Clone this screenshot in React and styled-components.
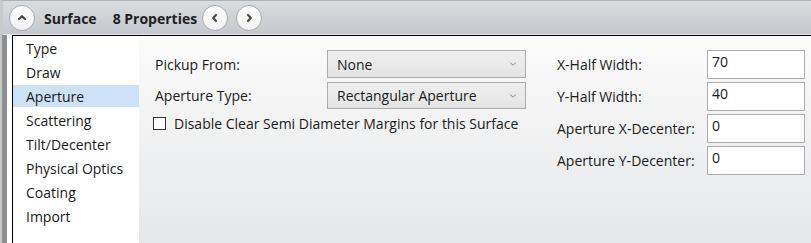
import React from "react";
import styled, { createGlobalStyle } from "styled-components";

const Global = createGlobalStyle`
  html, body { margin: 0; padding: 0; background: #fff; }
  body { font-family: "Open Sans", "Noto Sans", sans-serif; color: #1a1a1a; }
  * { box-sizing: border-box; }
`;

const Window = styled.div`
  width: 811px;
  height: 243px;
  display: flex;
  flex-direction: column;
  overflow: hidden;
  background: #fff;
`;

const Header = styled.div`
  height: 35px;
  flex: none;
  display: flex;
  align-items: center;
  padding-left: 6px;
  background: linear-gradient(#dadce0, #c4c7cb);
  border-top: 1px solid #aeb1b5;
  border-left: 3px solid #c9cacc;
  box-shadow: inset 0 -1px 0 #e4e5e7;
`;

const RoundButton = styled.button`
  width: 26px;
  height: 26px;
  padding: 0;
  border-radius: 50%;
  border: 1px solid #a9abae;
  background: linear-gradient(#ffffff, #f1f1f1);
  display: flex;
  align-items: center;
  justify-content: center;
  margin-left: ${(p) => p.$ml || 0}px;
  flex: none;
`;

const Title = styled.span`
  font-weight: 700;
  font-size: 14px;
  margin-left: ${(p) => p.$ml}px;
  color: #1e1e1e;
  white-space: nowrap;
`;

const Body = styled.div`
  flex: 1;
  display: flex;
  min-height: 0;
`;

const Gutter = styled.div`
  width: 12px;
  flex: none;
  background: linear-gradient(to right, #c8c9cb 0 2px, #8e8f91 2px 7px, #fff 7px);
`;

const Panel = styled.div`
  flex: 1;
  display: flex;
  border-top: 1px solid #000;
  border-left: 1px solid #000;
`;

const List = styled.ul`
  list-style: none;
  margin: 0;
  padding: 0;
  width: 126px;
  flex: none;
  display: flex;
  flex-direction: column;
  background: #fff;
`;

const Item = styled.li`
  height: 22px;
  margin: 1px 0;
  padding-left: 13px;
  display: flex;
  align-items: center;
  font-size: 14px;
  white-space: nowrap;
  background: ${(p) => (p.$active ? "#cde1f7" : "transparent")};
`;

const Content = styled.div`
  flex: 1;
  display: flex;
  padding: 14px 0 0 16px;
  background: linear-gradient(#fbfbfb, #e6e7e9);
`;

const LeftForm = styled.div`
  width: 402px;
  display: flex;
  flex-direction: column;
  gap: 4px;
`;

const Row = styled.div`
  display: flex;
  align-items: center;
`;

const Label = styled.span`
  width: ${(p) => p.$w}px;
  flex: none;
  font-size: 14px;
  white-space: nowrap;
`;

const Select = styled.div`
  width: 199px;
  height: ${(p) => p.$h || 28}px;
  border: 1px solid #acacac;
  background: linear-gradient(#efefef, #e4e4e4);
  display: flex;
  align-items: center;
  justify-content: space-between;
  padding: 0 7px 0 9px;
  font-size: 14px;
`;

const CheckRow = styled.label`
  display: flex;
  align-items: center;
  gap: 8px;
  margin-left: -2px;
  margin-top: 1px;
  font-size: 14px;
  white-space: nowrap;
`;

const CheckBox = styled.span`
  width: 13px;
  height: 13px;
  border: 1px solid #333;
  background: #fff;
  flex: none;
`;

const RightForm = styled.div`
  display: flex;
  flex-direction: column;
  gap: 3px;
`;

const Input = styled.div`
  width: 98px;
  height: 29px;
  border: 1px solid #acacac;
  background: #fff;
  padding: 1px 0 0 4px;
  font-size: 14px;
  line-height: 20px;
`;

const Chevron = ({ dir, size = 12, stroke = "#4a4a4a", w = 2.2 }) => {
  const paths = {
    up: "M3 7 L6 4.2 L9 7",
    down: "M3 4.5 L6 7.5 L9 4.5",
    left: "M7 3 L4.2 6 L7 9",
    right: "M5 3 L7.8 6 L5 9",
  };
  return (
    <svg width={size} height={size} viewBox="0 0 12 12">
      <path d={paths[dir]} fill="none" stroke={stroke} strokeWidth={w} strokeLinecap="round" strokeLinejoin="round" />
    </svg>
  );
};

const items = ["Type", "Draw", "Aperture", "Scattering", "Tilt/Decenter", "Physical Optics", "Coating", "Import"];

export default function App() {
  return (
    <Window>
      <Global />
      <Header>
        <RoundButton><Chevron dir="up" /></RoundButton>
        <Title $ml={9}>Surface</Title>
        <Title $ml={16}>8 Properties</Title>
        <RoundButton $ml={5}><Chevron dir="left" /></RoundButton>
        <RoundButton $ml={8}><Chevron dir="right" /></RoundButton>
      </Header>
      <Body>
        <Gutter />
        <Panel>
          <List>
            {items.map((t) => (
              <Item key={t} $active={t === "Aperture"}>{t}</Item>
            ))}
          </List>
          <Content>
            <LeftForm>
              <Row>
                <Label $w={172}>Pickup From:</Label>
                <Select>None<Chevron dir="down" size={10} stroke="#777" w={1.1} /></Select>
              </Row>
              <Row>
                <Label $w={172}>Aperture Type:</Label>
                <Select $h={27}>Rectangular Aperture<Chevron dir="down" size={10} stroke="#777" w={1.1} /></Select>
              </Row>
              <CheckRow><CheckBox />Disable Clear Semi Diameter Margins for this Surface</CheckRow>
            </LeftForm>
            <RightForm>
              <Row><Label $w={150}>X-Half Width:</Label><Input>70</Input></Row>
              <Row><Label $w={150}>Y-Half Width:</Label><Input>40</Input></Row>
              <Row><Label $w={150}>Aperture X-Decenter:</Label><Input>0</Input></Row>
              <Row><Label $w={150}>Aperture Y-Decenter:</Label><Input>0</Input></Row>
            </RightForm>
          </Content>
        </Panel>
      </Body>
    </Window>
  );
}
